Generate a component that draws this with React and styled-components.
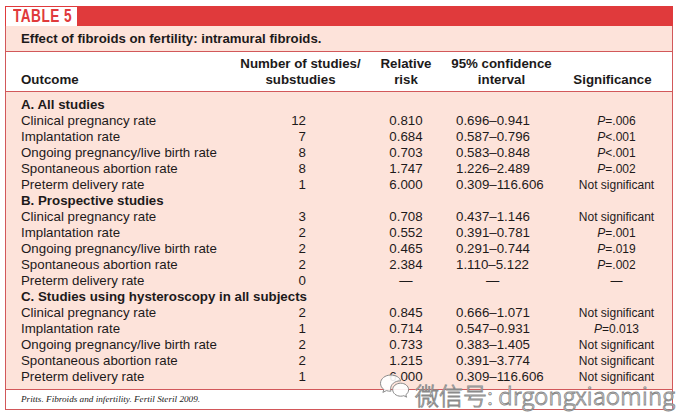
import React from 'react';
import styled, { createGlobalStyle } from 'styled-components';

const GlobalStyle = createGlobalStyle`
  body {
    margin: 0;
    background: #fff;
    font-family: "Liberation Sans", Arial, sans-serif;
    color: #1d1a1a;
  }
`;

const RED = '#e03a3c';
const LINE = '#d2585a';
const PINK = '#fde3da';

const Page = styled.div`
  position: relative;
  width: 678px;
  height: 416px;
  padding: 6px 5px;
  box-sizing: border-box;
  overflow: hidden;
`;

const Frame = styled.div`
  width: 668px;
`;

const TopBar = styled.div`
  display: flex;
  height: 20px;
  background: ${RED};
`;

const Label = styled.div`
  width: 71px;
  margin: 1px 0 0 1px;
  background: #fff;
  color: ${RED};
  font-weight: 700;
  font-size: 17.5px;
  line-height: 19px;
  padding-left: 7px;
  box-sizing: border-box;
  overflow: hidden;
  white-space: nowrap;
`;

const Narrow = styled.span`
  display: inline-block;
  transform: scaleX(0.78);
  transform-origin: left center;
  letter-spacing: 0.6px;
`;

const Caption = styled.div`
  background: ${PINK};
  border-left: 1px solid ${LINE};
  border-right: 1px solid ${LINE};
  height: 25px;
  line-height: 25px;
  padding-left: 15px;
  font-weight: 700;
  font-size: 13.2px;
`;

const Grid = styled.div`
  display: grid;
  grid-template-columns: 233px 123px 88px 103px 1fr;
  border: 1px solid ${LINE};
  background: ${(p) => (p.$tint ? PINK : '#fff')};
  padding: ${(p) => p.$pad || '0'};
  border-top: ${(p) => (p.$noTop ? 'none' : `1px solid ${LINE}`)};
`;

const HeadCell = styled.div`
  align-self: end;
  font-weight: 700;
  font-size: 13.3px;
  line-height: 16px;
  white-space: nowrap;
  text-align: ${(p) => p.$align || 'center'};
  padding-left: ${(p) => p.$pl || 0}px;
`;

const Cell = styled.div`
  font-size: ${(p) => p.$size || 13.3}px;
  line-height: 16px;
  white-space: nowrap;
  text-align: ${(p) => p.$align || 'left'};
  padding-left: ${(p) => p.$pl || 0}px;
  padding-right: ${(p) => p.$pr || 0}px;
`;

const Section = styled.div`
  grid-column: 1 / -1;
  font-weight: 700;
  font-size: 13.3px;
  line-height: 16px;
  padding-left: 15px;
`;

const Footer = styled.div`
  border: 1px solid ${LINE};
  border-top: none;
  background: #fff;
  height: 19px;
  line-height: 19px;
  padding-left: 15px;
  font-family: "Liberation Serif", "Times New Roman", serif;
  font-style: italic;
  font-size: 9.2px;
`;

const Watermark = styled.div`
  position: absolute;
  left: 379px;
  top: 373px;
  display: flex;
  align-items: flex-start;
  gap: 4px;
  white-space: nowrap;
`;

const WaterText = styled.span`
  margin-top: 8px;
  font-family: "Noto Sans CJK SC", "DejaVu Sans", sans-serif;
  font-size: 24px;
  font-weight: 300;
  line-height: 28px;
  color: rgba(255, 255, 255, 0.92);
  -webkit-text-stroke: 0.9px #8a8a8a;
  white-space: nowrap;
`;

const P = ({ v }) => (
  <>
    <i>P</i>
    {v}
  </>
);

const groups = [
  {
    title: 'A. All studies',
    rows: [
      ['Clinical pregnancy rate', '12', '0.810', '0.696–0.941', <P v="=.006" />],
      ['Implantation rate', '7', '0.684', '0.587–0.796', <P v="<.001" />],
      ['Ongoing pregnancy/live birth rate', '8', '0.703', '0.583–0.848', <P v="<.001" />],
      ['Spontaneous abortion rate', '8', '1.747', '1.226–2.489', <P v="=.002" />],
      ['Preterm delivery rate', '1', '6.000', '0.309–116.606', 'Not significant'],
    ],
  },
  {
    title: 'B. Prospective studies',
    rows: [
      ['Clinical pregnancy rate', '3', '0.708', '0.437–1.146', 'Not significant'],
      ['Implantation rate', '2', '0.552', '0.391–0.781', <P v="=.001" />],
      ['Ongoing pregnancy/live birth rate', '2', '0.465', '0.291–0.744', <P v="=.019" />],
      ['Spontaneous abortion rate', '2', '2.384', '1.110–5.122', <P v="=.002" />],
      ['Preterm delivery rate', '0', '—', '—', '—'],
    ],
  },
  {
    title: 'C. Studies using hysteroscopy in all subjects',
    rows: [
      ['Clinical pregnancy rate', '2', '0.845', '0.666–1.071', 'Not significant'],
      ['Implantation rate', '1', '0.714', '0.547–0.931', <P v="=0.013" />],
      ['Ongoing pregnancy/live birth rate', '2', '0.733', '0.383–1.405', 'Not significant'],
      ['Spontaneous abortion rate', '2', '1.215', '0.391–3.774', 'Not significant'],
      ['Preterm delivery rate', '1', '6.000', '0.309–116.606', 'Not significant'],
    ],
  },
];

const WeChatIcon = () => (
  <svg width="32" height="26" viewBox="0 0 32 26" fill="rgba(255,255,255,0.9)" stroke="#8a8a8a" strokeWidth="1">
    <path d="M12 2C6 2 1.5 5.8 1.5 10.3c0 2.5 1.3 4.7 3.4 6.2l-1 2.9 3.5-1.8c1.3.4 2.6.6 4 .6h.6c-.3-.8-.4-1.6-.4-2.4 0-4.4 4.2-7.9 9.3-7.9h.7C20.8 4.4 16.8 2 12 2z" />
    <path d="M21.7 10.2c-4.5 0-8 3-8 6.5s3.5 6.5 8 6.5c1.1 0 2.1-.2 3.1-.5l2.8 1.5-.8-2.4c1.7-1.2 2.8-3 2.8-5.1 0-3.6-3.5-6.5-7.9-6.5z" />
  </svg>
);

export default function App() {
  return (
    <Page>
      <GlobalStyle />
      <Frame>
        <TopBar>
          <Label>
            <Narrow>TABLE 5</Narrow>
          </Label>
        </TopBar>
        <Caption>Effect of fibroids on fertility: intramural fibroids.</Caption>
        <Grid $pad="4px 0 3px">
          <HeadCell $align="left" $pl={15}>Outcome</HeadCell>
          <HeadCell>
            Number of studies/
            <br />
            substudies
          </HeadCell>
          <HeadCell>
            Relative
            <br />
            risk
          </HeadCell>
          <HeadCell>
            95% confidence
            <br />
            interval
          </HeadCell>
          <HeadCell>Significance</HeadCell>
        </Grid>
        <Grid $tint $noTop $pad="5px 0 4px">
          {groups.map((g) => (
            <React.Fragment key={g.title}>
              <Section>{g.title}</Section>
              {g.rows.map((r, i) => (
                <React.Fragment key={g.title + i}>
                  <Cell $pl={15}>{r[0]}</Cell>
                  <Cell $align="right" $pr={56}>{r[1]}</Cell>
                  <Cell $align="center">{r[2]}</Cell>
                  <Cell $pl={r[3] === '—' ? 36 : 6}>{r[3]}</Cell>
                  <Cell $align="center" $pl={8} $size={12}>{r[4]}</Cell>
                </React.Fragment>
              ))}
            </React.Fragment>
          ))}
        </Grid>
        <Footer>Pritts. Fibroids and infertility. Fertil Steril 2009.</Footer>
      </Frame>
      <Watermark>
        <WeChatIcon />
        <WaterText>微信号: drgongxiaoming</WaterText>
      </Watermark>
    </Page>
  );
}
